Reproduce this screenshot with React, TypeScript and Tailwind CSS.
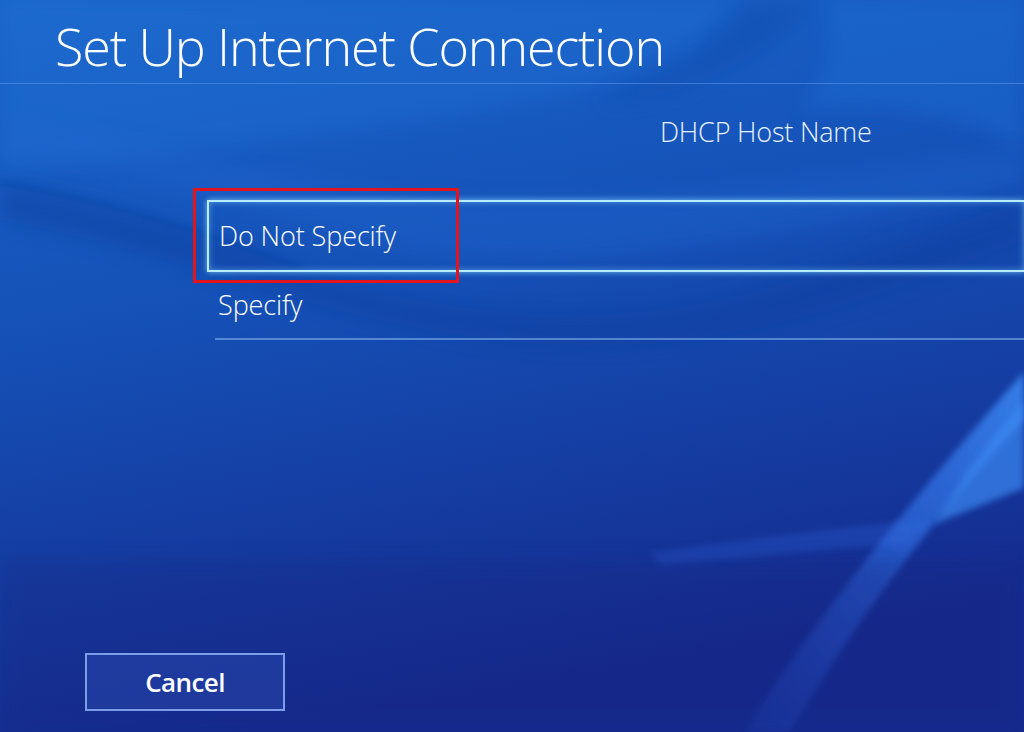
import React from "react"

function Backdrop() {
  return (
    <svg className="absolute inset-0 h-full w-full" viewBox="0 0 1024 732" preserveAspectRatio="none">
      <defs>
        <linearGradient id="base" x1="0" y1="0" x2="0.25" y2="1">
          <stop offset="0" stopColor="#1a66cb" />
          <stop offset="0.45" stopColor="#1550b6" />
          <stop offset="1" stopColor="#152a8e" />
        </linearGradient>
        <linearGradient id="streak" x1="1" y1="0" x2="0" y2="1">
          <stop offset="0" stopColor="#3a86f0" stopOpacity="0.9" />
          <stop offset="0.6" stopColor="#2f6ce6" stopOpacity="0.5" />
          <stop offset="1" stopColor="#2a5fe0" stopOpacity="0.15" />
        </linearGradient>
        <filter id="soft" x="-20%" y="-20%" width="140%" height="140%">
          <feGaussianBlur stdDeviation="10" />
        </filter>
        <filter id="softer" x="-20%" y="-20%" width="140%" height="140%">
          <feGaussianBlur stdDeviation="3" />
        </filter>
      </defs>
      <rect width="1024" height="732" fill="url(#base)" />
      {/* lighter sheet top-left */}
      <path d="M0 0 H740 C700 40 660 70 560 95 C400 130 200 150 0 170 Z" fill="#2172d6" opacity="0.35" filter="url(#soft)" />
      {/* dark wave top */}
      <path d="M745 0 C720 40 690 70 600 100 C640 110 760 70 820 0 Z" fill="#0f47a8" opacity="0.35" filter="url(#soft)" />
      {/* upper-right light */}
      <path d="M820 0 H1024 V150 C980 120 900 100 800 110 C830 70 840 30 820 0 Z" fill="#1f6fd6" opacity="0.4" filter="url(#soft)" />
      {/* middle wave: lighter crest then dark trough */}
      <path d="M0 150 C150 170 260 210 380 245 C520 280 700 250 880 215 C960 200 1000 190 1024 185 V150 C900 160 700 200 520 200 C330 200 180 140 0 120 Z" fill="#2068d2" opacity="0.3" filter="url(#soft)" />
      <path d="M0 185 C120 205 220 240 300 270 C400 305 540 325 660 310 C780 295 880 250 1024 200 V240 C900 290 760 340 620 345 C470 350 330 310 220 275 C140 250 60 230 0 220 Z" fill="#0e3e9e" opacity="0.45" filter="url(#soft)" />
      <path d="M0 182 C100 200 200 232 300 268" stroke="#0d3a98" strokeWidth="3" fill="none" opacity="0.45" filter="url(#softer)" />
      {/* faint horizontal sheen */}
      <path d="M650 553 C750 540 850 525 930 520 L905 545 C820 548 740 560 660 565 Z" fill="#2e64d8" opacity="0.3" filter="url(#softer)" />
      {/* bottom-right streak */}
      <path d="M1024 372 L1024 420 C950 500 860 610 790 732 L745 732 C820 610 920 490 1024 372 Z" fill="url(#streak)" filter="url(#softer)" />
      <path d="M1024 400 L1024 488 L934 524 C960 480 990 440 1024 400 Z" fill="#3a88f2" opacity="0.7" filter="url(#softer)" />
      {/* bottom darkening */}
      <rect x="0" y="560" width="1024" height="172" fill="#13257f" opacity="0.25" filter="url(#soft)" />
    </svg>
  )
}

export default function App() {
  return (
    <div
      className="relative h-[732px] w-full overflow-hidden text-white"
      style={{ fontFamily: '"Open Sans", "Noto Sans", sans-serif' }}
    >
      <Backdrop />

      <div className="relative flex h-full flex-col">
        {/* header */}
        <div className="h-[84px] border-b border-[#5a93e6]/60 pl-[55px] pt-[16px]">
          <h1 className="text-[52px] font-light leading-[60px] tracking-[-1.1px] text-white">
            Set Up Internet Connection
          </h1>
        </div>

        <div className="pl-[660px] pt-[28px] text-[27px] font-light leading-[40px] tracking-[-0.2px] text-[#e8f2ff]">
          DHCP Host Name
        </div>

        {/* option list */}
        <div className="ml-[207px] mt-[48px]">
          <div className="relative">
            <div className="flex h-[72px] items-center border-2 border-r-0 border-[#b8ecff] pl-[10px] shadow-[0_0_6px_rgba(140,220,255,0.8),inset_0_0_6px_rgba(140,220,255,0.5)]">
              <span className="text-[27px] font-light tracking-[-0.1px]">Do Not Specify</span>
            </div>
            <div className="pointer-events-none absolute -left-[14px] -top-[12px] h-[95px] w-[266px] border-[3px] border-[#e2141c]" />
          </div>
          <div className="ml-[8px] flex h-[68px] items-center border-b-2 border-[#7fb1ee]/60 pl-[3px]">
            <span className="text-[27px] font-light tracking-[-0.1px]">Specify</span>
          </div>
        </div>

        <div className="flex-1" />

        {/* footer */}
        <div className="pb-[21px] pl-[85px]">
          <button className="flex h-[58px] w-[200px] items-center justify-center border-2 border-[#7c9eea] bg-[#2a48ad]/50 text-[26px] font-semibold tracking-[-0.6px] text-white">
            Cancel
          </button>
        </div>
      </div>
    </div>
  )
}
